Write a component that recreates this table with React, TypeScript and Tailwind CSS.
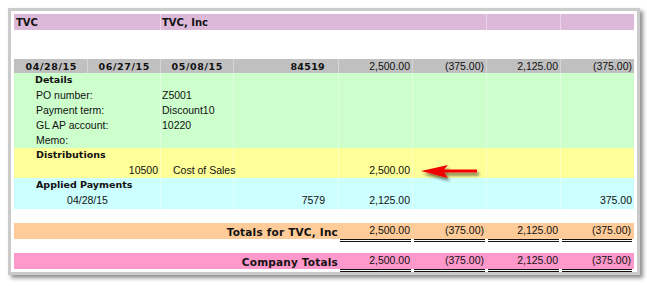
import React from "react";

const grid = "grid grid-cols-[74px_73px_73px_105px_74px_74px_74px_73px]";
const bold = "font-['DejaVu_Sans',sans-serif] font-bold text-[9.5px]";
const reg = "font-['Liberation_Sans',Arial,sans-serif] text-[10.5px]";
const sep = "border-r border-white/40";
const cell = "flex items-center whitespace-nowrap";

function Num({ v, cls = "" }: { v: string; cls?: string }) {
  return <div className={`${cell} justify-end pr-[2px] ${reg} ${cls}`}>{v}</div>;
}

function TotalRow({ label, bg }: { label: string; bg: string }) {
  const vals = ["2,500.00", "(375.00)", "2,125.00", "(375.00)"];
  return (
    <div className={`${grid} h-[16px] ${bg}`}>
      <div className={`col-span-4 ${cell} justify-end pr-[1px] font-['DejaVu_Sans',sans-serif] font-bold text-[10.5px] tracking-[0.2px]`}>
        {label}
      </div>
      {vals.map((v, i) => (
        <div key={i} className="flex h-full pl-[1px] pr-[2px]">
          <div className={`flex-1 flex items-center justify-end pr-[1px] border-b-[3px] border-double border-[#111] ${reg}`}>
            {v}
          </div>
        </div>
      ))}
    </div>
  );
}

export default function App() {
  const green = `${grid} h-[15px] bg-[#ccffcc]`;
  const greenRest = (
    <>
      <div className={sep} />
      <div className={sep} />
      <div className={sep} />
      <div className={sep} />
      <div className={sep} />
      <div />
    </>
  );
  const labels: [string, string][] = [
    ["PO number:", "Z5001"],
    ["Payment term:", "Discount10"],
    ["GL AP account:", "10220"],
    ["Memo:", ""],
  ];
  return (
    <div className="w-[647px] h-[286px] bg-white text-[#111] pt-[8px] pl-[8px]">
      <div className="w-[632px] border-[3px] border-[#cbcbcb] bg-white p-[3px] shadow-[3px_3px_4px_rgba(0,0,0,0.45)]">
        <div className="relative w-[620px] flex flex-col">
          {/* Purple header */}
          <div className={`${grid} h-[16px] bg-[#dcb9d9]`}>
            <div className={`col-span-2 ${sep} ${cell} pl-[2px] ${bold} text-[10px]`}>TVC</div>
            <div className={`col-span-4 ${sep} ${cell} pl-[1px] ${bold} text-[10px]`}>TVC, Inc</div>
            <div className={sep} />
            <div />
          </div>
          <div className="h-[29px]" />
          {/* Gray row */}
          <div className={`${grid} h-[14px] bg-[#c0c0c0]`}>
            {["04/28/15", "06/27/15", "05/08/15"].map((d) => (
              <div key={d} className={`${cell} justify-end pr-[10px] border-r border-[#d6d6d6] ${bold} tracking-[0.6px]`}>
                {d}
              </div>
            ))}
            <div className={`${cell} justify-end pr-[13px] border-r border-[#d6d6d6] ${bold} tracking-[0.3px]`}>84519</div>
            <Num v="2,500.00" cls="border-r border-[#d6d6d6]" />
            <Num v="(375.00)" cls="border-r border-[#d6d6d6]" />
            <Num v="2,125.00" cls="border-r border-[#d6d6d6]" />
            <Num v="(375.00)" cls="pr-[1px]" />
          </div>
          {/* Details */}
          <div className={green}>
            <div className={`col-span-2 ${sep} ${cell} pl-[21px] ${bold}`}>Details</div>
            {greenRest}
          </div>
          {labels.map(([l, v]) => (
            <div key={l} className={green}>
              <div className={`col-span-2 ${sep} ${cell} pl-[22px] ${reg}`}>{l}</div>
              <div className={`${sep} ${cell} pl-[1px] ${reg}`}>{v}</div>
              <div className={sep} />
              <div className={sep} />
              <div className={sep} />
              <div className={sep} />
              <div />
            </div>
          ))}
          {/* Distributions */}
          <div className={`${grid} h-[15px] bg-[#ffff99]`}>
            <div className={`col-span-2 ${sep} ${cell} pl-[22px] ${bold}`}>Distributions</div>
            {greenRest}
          </div>
          <div className={`${grid} h-[15px] bg-[#ffff99]`}>
            <div className={`col-span-2 ${sep} ${cell} justify-end pr-[2px] ${reg}`}>10500</div>
            <div className={`${sep} ${cell} pl-[12px] ${reg}`}>Cost of Sales</div>
            <div className={sep} />
            <Num v="2,500.00" cls={sep} />
            <div className={sep} />
            <div className={sep} />
            <div />
          </div>
          {/* Applied payments */}
          <div className={`${grid} h-[15px] bg-[#ccffff]`}>
            <div className={`col-span-2 ${sep} ${cell} pl-[22px] ${bold}`}>Applied Payments</div>
            {greenRest}
          </div>
          <div className={`${grid} h-[16px] bg-[#ccffff]`}>
            <div className={`col-span-2 ${sep} ${cell} justify-center pl-[1px] ${reg}`}>04/28/15</div>
            <div className={sep} />
            <div className={`${sep} ${cell} justify-end pr-[13px] ${reg}`}>7579</div>
            <Num v="2,125.00" cls={sep} />
            <div className={sep} />
            <div className={sep} />
            <Num v="375.00" cls="pr-[1px]" />
          </div>
          <div className="h-[14px]" />
          <TotalRow label="Totals for TVC, Inc" bg="bg-[#ffcc99]" />
          <div className="h-[14px]" />
          <TotalRow label="Company Totals" bg="bg-[#ff99cc]" />

          {/* Red arrow overlay */}
          <svg
            className="absolute left-[401px] top-[146px]"
            width="72"
            height="26"
            viewBox="0 0 72 26"
          >
            <defs>
              <filter id="sh" x="-20%" y="-40%" width="150%" height="200%">
                <feDropShadow dx="2" dy="3" stdDeviation="1.6" floodColor="#000" floodOpacity="0.55" />
              </filter>
            </defs>
            <path
              d="M6,11 L33,5 L29,9.6 L62,9.6 L62,12.6 L29,12.6 L33,18 Z"
              fill="#f00000"
              filter="url(#sh)"
            />
          </svg>
        </div>
      </div>
    </div>
  );
}
